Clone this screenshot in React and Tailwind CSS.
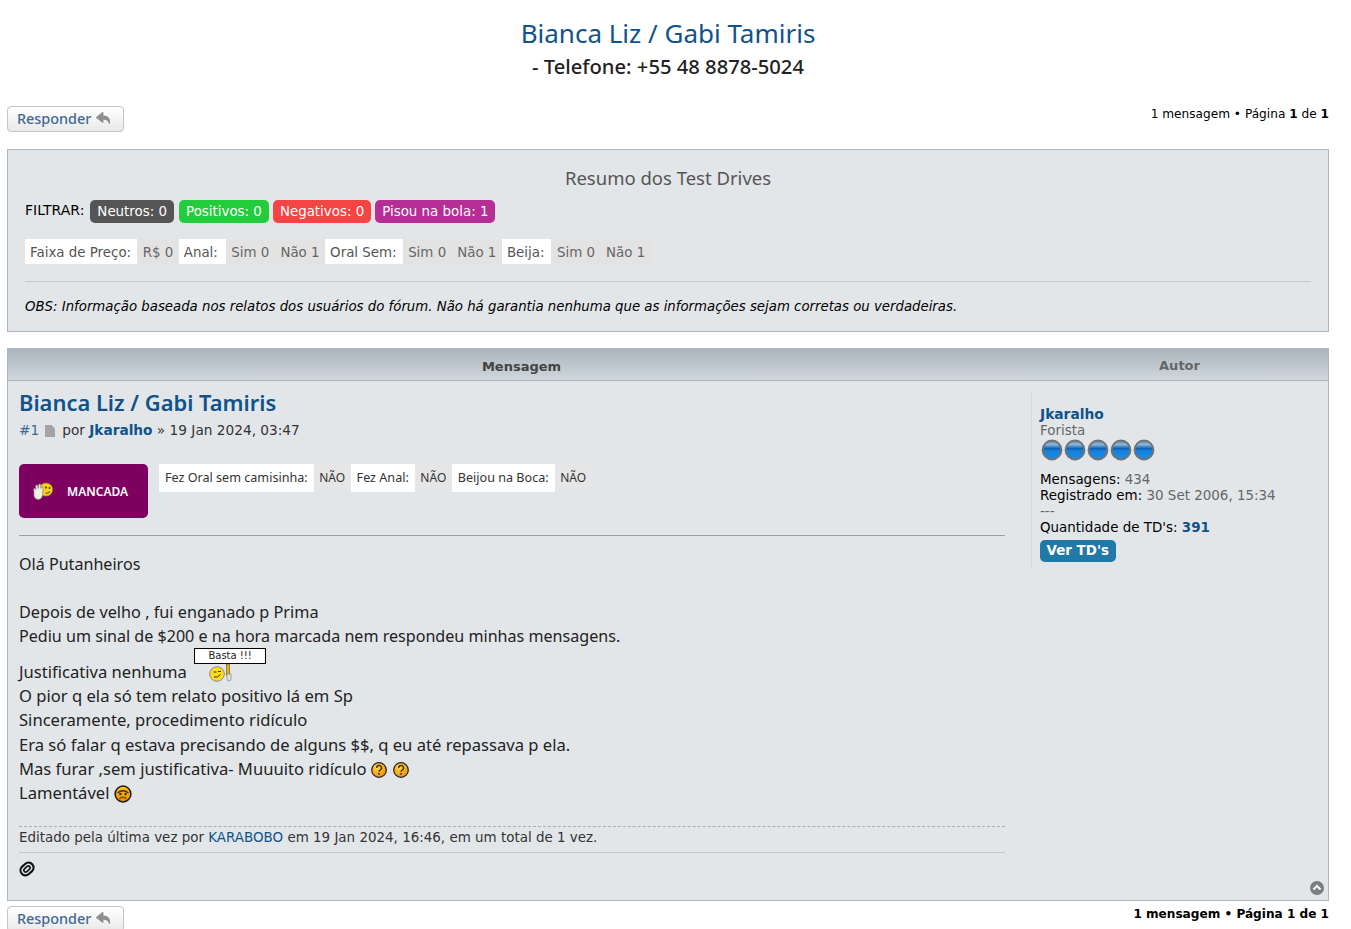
const body = { fontFamily: '"Noto Sans", sans-serif' };

function ReplyIcon({ className = "" }) {
  return (
    <svg viewBox="0 0 512 512" className={className} fill="#8f8f8f" aria-hidden="true">
      <path d="M205 34 L10 190 a20 20 0 0 0 0 31 L205 378 c13 10 32 1 32 -15 V278 c90 0 150 20 180 130 c4 14 24 14 27 -1 C470 260 420 150 237 140 V50 c0 -16 -19 -26 -32 -16 Z" />
    </svg>
  );
}

function ReplyButton() {
  return (
    <div className="flex h-[26px] w-[117px] shrink-0 items-center gap-[5px] rounded-[4px] border border-[#c7c3bf] bg-gradient-to-b from-white to-[#e9e9e9] pb-[1px] pl-[9px] text-[14.4px] font-medium text-[#3f6a94]" style={body}>
      <span>Responder</span>
      <ReplyIcon className="h-[16px] w-[16px]" />
    </div>
  );
}

function Badge({ className, children }) {
  return <span className={`flex h-[23px] items-center rounded-[5px] px-[7px] pt-px text-[13.4px] text-white ${className}`}>{children}</span>;
}

function Label({ className = "pr-[6px]", children }) {
  return <span className={`flex h-[25px] items-center bg-white pt-[4px] pl-[5px] text-[#555] ${className}`}>{children}</span>;
}
function Value({ children }) {
  return <span className="flex h-[25px] items-center bg-[#e3e3e3] px-[5.5px] pt-[4px] text-[#666]">{children}</span>;
}

function Qa({ q, a }) {
  return (
    <>
      <span className="flex h-[28px] items-center bg-white px-[6px] text-[12.6px] text-[#333]" style={body}>{q}</span>
      <span className="flex h-[28px] items-center bg-[#e6e6e6] px-[5.5px] text-[#333]" style={body}>{a}</span>
    </>
  );
}

function Orb() {
  return (
    <svg viewBox="0 0 22 22" className="h-[22px] w-[22px]" aria-hidden="true">
      <defs>
        <linearGradient id="orb" x1="0" x2="0" y1="0" y2="1">
          <stop offset="0" stopColor="#55809f" />
          <stop offset="0.2" stopColor="#93b9d8" />
          <stop offset="0.42" stopColor="#0f62b4" />
          <stop offset="0.55" stopColor="#1580dc" />
          <stop offset="1" stopColor="#1b8de8" />
        </linearGradient>
      </defs>
      <circle cx="11" cy="11" r="9.4" fill="url(#orb)" stroke="#6f7478" strokeWidth="2" />
    </svg>
  );
}

function Question() {
  return (
    <svg viewBox="0 0 16 16" className="inline-block h-[16px] w-[16px] align-[-3px]" aria-hidden="true">
      <defs>
        <radialGradient id="q" cx="0.4" cy="0.3" r="0.8">
          <stop offset="0" stopColor="#ffd84a" />
          <stop offset="1" stopColor="#e88a00" />
        </radialGradient>
      </defs>
      <circle cx="8" cy="8" r="7.3" fill="url(#q)" stroke="#222" strokeWidth="1.2" />
      <path d="M5.7 6 a2.4 2.4 0 1 1 3.4 2.1 c-0.8 0.4 -1.1 0.8 -1.1 1.6" fill="none" stroke="#4a2b00" strokeWidth="1.4" />
      <rect x="7.2" y="11" width="1.6" height="1.6" fill="#4a2b00" />
    </svg>
  );
}

function Sad() {
  return (
    <svg viewBox="0 0 18 18" className="inline-block h-[18px] w-[18px] align-[-4px]" aria-hidden="true">
      <defs>
        <linearGradient id="sadfill" x1="0" x2="0" y1="0" y2="1">
          <stop offset="0" stopColor="#ffc31e" />
          <stop offset="1" stopColor="#ee8a00" />
        </linearGradient>
      </defs>
      <circle cx="9" cy="9" r="7.9" fill="url(#sadfill)" stroke="#1a1a1a" strokeWidth="1.5" />
      <path d="M3.5 8 Q9 3.5 14.5 8" fill="none" stroke="#333" strokeWidth="1.4" />
      <circle cx="6.4" cy="9" r="1.2" fill="#333" />
      <circle cx="11.6" cy="9" r="1.2" fill="#333" />
      <path d="M5.5 14 a4 3.4 0 0 1 7 0" fill="none" stroke="#7a4a00" strokeWidth="1.3" />
    </svg>
  );
}

function Basta() {
  return (
    <span className="relative inline-block h-[18px] w-[24px] align-[-4px]">
      <span className="absolute -top-[16px] -left-[15px] flex h-[16px] w-[72px] items-center justify-center border border-black bg-white text-[10px] leading-none text-[#222]" style={{ fontFamily: '"DejaVu Sans", sans-serif' }}>Basta !!!</span>
      <svg viewBox="0 0 24 18" className="absolute top-0 left-0 h-[18px] w-[24px]" aria-hidden="true">
        <rect x="17.5" y="0" width="3" height="11" fill="#e8b400" stroke="#333" strokeWidth="0.5" />
        <path d="M18 10 h4 v5 a2 2 0 0 1 -4 0 Z" fill="#e6e2d8" stroke="#777" strokeWidth="0.6" />
        <circle cx="8" cy="10" r="7.3" fill="#ffdc1e" stroke="#8a8a8a" strokeWidth="1" />
        <path d="M4.5 8 h3 M9 7.5 h3" stroke="#333" strokeWidth="1" />
        <path d="M5 13 Q9 14 11.5 10.5" fill="none" stroke="#333" strokeWidth="1" />
      </svg>
    </span>
  );
}

function Waving() {
  return (
    <svg viewBox="0 0 20 18" className="h-[18px] w-[20px]" aria-hidden="true">
      <circle cx="13" cy="7.5" r="6.6" fill="#f7d117" stroke="#a08a00" strokeWidth="0.6" />
      <circle cx="13" cy="5.5" r="0.9" fill="#333" />
      <circle cx="16.5" cy="6" r="0.9" fill="#333" />
      <path d="M12.5 11 q2.5 1 4.5 -1.5" fill="none" stroke="#333" strokeWidth="0.9" />
      <path d="M1 10 q-1 -4 1 -4 l0.8 2 l0 -4.5 q1 -1 2 0 l0.4 3 l0.6 -4 q1 -1 2 0 l0 4 l1.2 -2 q1.5 0 1 2 l-0.5 7 q-1 4 -4 4 q-3.5 0 -4.5 -3.5 Z" fill="#f1eee2" stroke="#888" strokeWidth="0.7" />
    </svg>
  );
}

function Clip() {
  return (
    <svg viewBox="0 0 16 16" className="h-[16px] w-[16px]" aria-hidden="true">
      <g transform="rotate(-42 8 8)" fill="none" stroke="#111">
        <rect x="1" y="3" width="14" height="10" rx="5" strokeWidth="2.2" />
        <rect x="4.4" y="6.2" width="7.2" height="3.6" rx="1.8" strokeWidth="1.6" />
      </g>
    </svg>
  );
}

function Page() {
  return (
    <svg viewBox="0 0 10 12" className="mr-[7px] ml-[6px] inline-block h-[12px] w-[10px] align-[-2px]" aria-hidden="true">
      <path d="M0 0 H6.5 L10 3.5 V12 H0 Z" fill="#a3a3a3" />
    </svg>
  );
}

function TopIcon() {
  return (
    <svg viewBox="0 0 14 14" className="h-[14px] w-[14px]" aria-hidden="true">
      <circle cx="7" cy="7" r="7" fill="#7d7d7d" />
      <path d="M3.5 8.5 L7 5 L10.5 8.5" fill="none" stroke="#fff" strokeWidth="2" />
    </svg>
  );
}

function Pagination({ bold }) {
  return (
    <div className={`-mt-px text-right text-black ${bold ? "text-[12.1px] font-bold" : "text-[12.15px]"}`}>
      1 mensagem • Página <b>1</b> de <b>1</b>
    </div>
  );
}

export default function App() {
  return (
    <div className="h-[929px] overflow-hidden bg-white px-[7px] pr-[22px] text-[13.4px] text-[#333]" style={{ fontFamily: '"DejaVu Sans", sans-serif' }}>
      <header className="flex h-[106px] flex-col items-center pt-[15px]" style={body}>
        <h1 className="h-[36px] text-[26px] leading-[36px] text-[#105289]">Bianca Liz / Gabi Tamiris</h1>
        <h2 className="mt-[-3px] text-[20.2px] leading-[36px] font-medium text-[#222]">- Telefone: +55 48 8878-5024</h2>
      </header>

      <div className="flex h-[43px] items-start justify-between">
        <ReplyButton />
        <Pagination />
      </div>

      <section className="h-[183px] border border-[#aeb6bf] bg-[#e3e6e9] px-[17px]">
        <h3 className="mt-[14px] text-center text-[18.5px] leading-[28px] text-[#555]" style={body}>Resumo dos Test Drives</h3>
        <div className="mt-[8px] flex items-start gap-[5px] text-[14px] text-black">
          <span className="mr-[1px]">FILTRAR:</span>
          <Badge className="bg-[#555555]">Neutros: 0</Badge>
          <Badge className="bg-[#22cc3a]">Positivos: 0</Badge>
          <Badge className="-ml-px bg-[#f44444]">Negativos: 0</Badge>
          <Badge className="-ml-px bg-[#b62d96]">Pisou na bola: 1</Badge>
        </div>
        <div className="mt-[16px] flex text-[13.4px]">
          <Label>Faixa de Preço:</Label>
          <Value>R$ 0</Value>
          <Label className="pr-[8px]">Anal:</Label>
          <Value>Sim 0</Value>
          <Value>Não 1</Value>
          <Label>Oral Sem:</Label>
          <Value>Sim 0</Value>
          <Value>Não 1</Value>
          <Label className="pr-[7px]">Beija:</Label>
          <Value>Sim 0</Value>
          <Value>Não 1</Value>
        </div>
        <div className="mt-[17px] border-t border-[#c9c9c9] pt-[16px] text-[13.3px] leading-[18px] text-black italic">
          OBS: Informação baseada nos relatos dos usuários do fórum. Não há garantia nenhuma que as informações sejam corretas ou verdadeiras.
        </div>
      </section>

      <section className="mt-[16px] h-[553px] border border-[#aeb6bf] bg-[#e3e6e9]">
        <div className="flex h-[32px] items-center border-b border-[#a9b3bd] bg-gradient-to-b from-[#acb5be] to-[#cfd6dc] pt-[5px] text-[13px] font-bold">
          <div className="w-[1027px] text-center text-[#444]">Mensagem</div>
          <div className="-mt-[2px] flex-1 pr-[4px] text-center text-[#666]">Autor</div>
        </div>
        <div className="flex h-[520px]">
          <article className="relative w-[1023px] shrink-0 pr-[26px] pl-[11px]">
            <h2 className="pt-[6px] text-[21.9px] leading-[32px] font-semibold text-[#105289]" style={body}>Bianca Liz / Gabi Tamiris</h2>
            <p className="mt-[2px] text-[13.7px] leading-[18px] text-[#333]">
              <span className="text-[#3f6a94]">#1</span>
              <Page />
              por <b className="text-[#105289]">Jkaralho</b> » 19 Jan 2024, 03:47
            </p>
            <div className="mt-[25px] flex h-[55px] items-start text-[12px]">
              <div className="flex h-[54px] w-[129px] items-center rounded-[5px] bg-[#7e0060] pl-[14px] text-white">
                <Waving />
                <span className="mt-[2px] ml-[14px] text-[12px] font-semibold" style={body}>MANCADA</span>
              </div>
              <div className="ml-[11px] flex">
                <Qa q="Fez Oral sem camisinha:" a="NÃO" />
                <Qa q="Fez Anal:" a="NÃO" />
                <Qa q="Beijou na Boca:" a="NÃO" />
              </div>
            </div>
            <div className="mt-[16px] border-t border-[#9a9fa5]" />
            <div className="mt-[16px] text-[16.1px] leading-[24px] text-[#222]" style={body}>
              <p>Olá Putanheiros</p>
              <p className="mt-[24px] text-[16.25px]">Depois de velho , fui enganado p Prima</p>
              <p>Pediu um sinal de $200 e na hora marcada nem respondeu minhas mensagens.</p>
              <div className="text-[16.6px]">
                <p className="mt-[12px]">Justificativa nenhuma <span className="ml-[18px]"><Basta /></span></p>
                <p>O pior q ela só tem relato positivo lá em Sp</p>
                <p>Sinceramente, procedimento ridículo</p>
                <p className="mt-px">Era só falar q estava precisando de alguns $$, q eu até repassava p ela.</p>
                <p>Mas furar ,sem justificativa- Muuuito ridículo <Question /> <span className="ml-[2px]"><Question /></span></p>
                <p>Lamentável <Sad /></p>
              </div>
            </div>
            <div className="mt-[21px] border-t border-dashed border-[#a9aeb3] pt-[2px] text-[13.45px] leading-[17px] text-[#333]">
              Editado pela última vez por <span className="text-[#105289]">KARABOBO</span> em 19 Jan 2024, 16:46, em um total de 1 vez.
            </div>
            <div className="mt-[6px] border-t border-[#c4c7ca] pt-[8px]"><Clip /></div>
          </article>
          <aside className="relative flex-1">
            <div className="mt-[11px] h-[177px] border-l border-[#d7dadd] pt-[15px] pl-[8px] text-[13.45px] leading-[15.7px] text-black">
              <div className="text-[13.8px] font-bold text-[#105289]">Jkaralho</div>
              <div className="text-[#666]">Forista</div>
              <div className="mt-[1px] ml-[1px] flex gap-px"><Orb /><Orb /><Orb /><Orb /><Orb /></div>
              <div className="mt-[11px]">Mensagens: <span className="text-[#666]">434</span></div>
              <div>Registrado em: <span className="text-[#666]">30 Set 2006, 15:34</span></div>
              <div className="text-[#666]">---</div>
              <div>Quantidade de TD's: <b className="text-[#105289]">391</b></div>
              <span className="mt-[5px] inline-flex h-[22px] items-center rounded-[5px] bg-[#2179a8] px-[6.5px] font-bold text-white">Ver TD's</span>
            </div>
            <div className="absolute right-[4px] bottom-[6px]"><TopIcon /></div>
          </aside>
        </div>
      </section>

      <div className="mt-[5px] flex items-start justify-between">
        <ReplyButton />
        <Pagination bold />
      </div>
    </div>
  );
}
